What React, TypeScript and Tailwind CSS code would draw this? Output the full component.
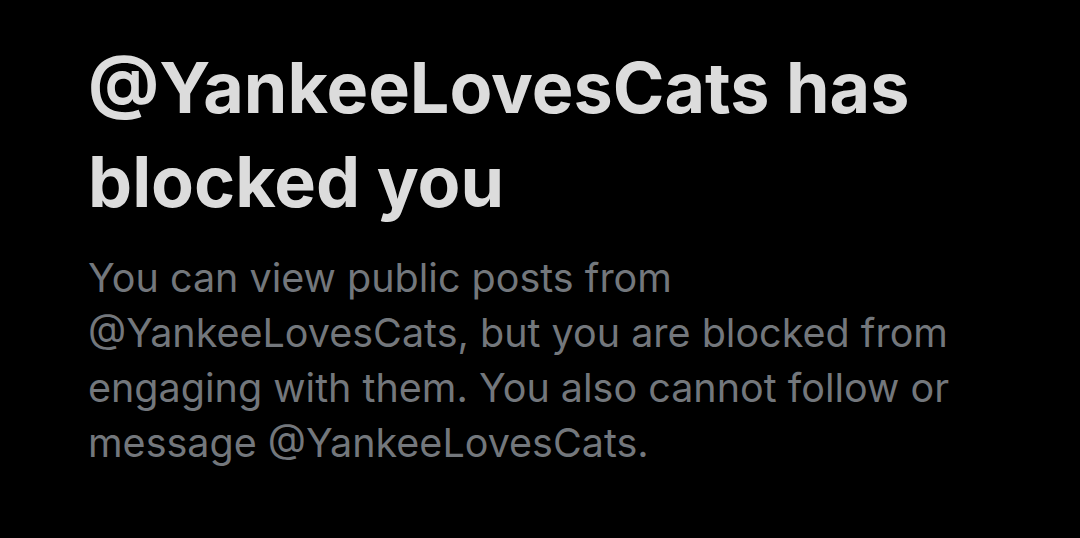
export default function App() {
  return (
    <div className="w-[1080px] h-[538px] bg-black overflow-hidden pl-[88px] pt-[41px]" style={{ fontFamily: "Inter, 'Noto Sans', sans-serif" }}>
      <h1 className="text-[70px] leading-[94px] font-bold text-[#dcdcdc] w-[960px]">
        <span className="block">@YankeeLovesCats has</span>
        <span className="block">blocked you</span>
      </h1>
      <p className="mt-[22px] text-[39.5px] leading-[55px] text-[#73777c] w-[960px]">
        <span className="block">You can view public posts from</span>
        <span className="block">@YankeeLovesCats, but you are blocked from</span>
        <span className="block">engaging with them. You also cannot follow or</span>
        <span className="block">message @YankeeLovesCats.</span>
      </p>
    </div>
  );
}
